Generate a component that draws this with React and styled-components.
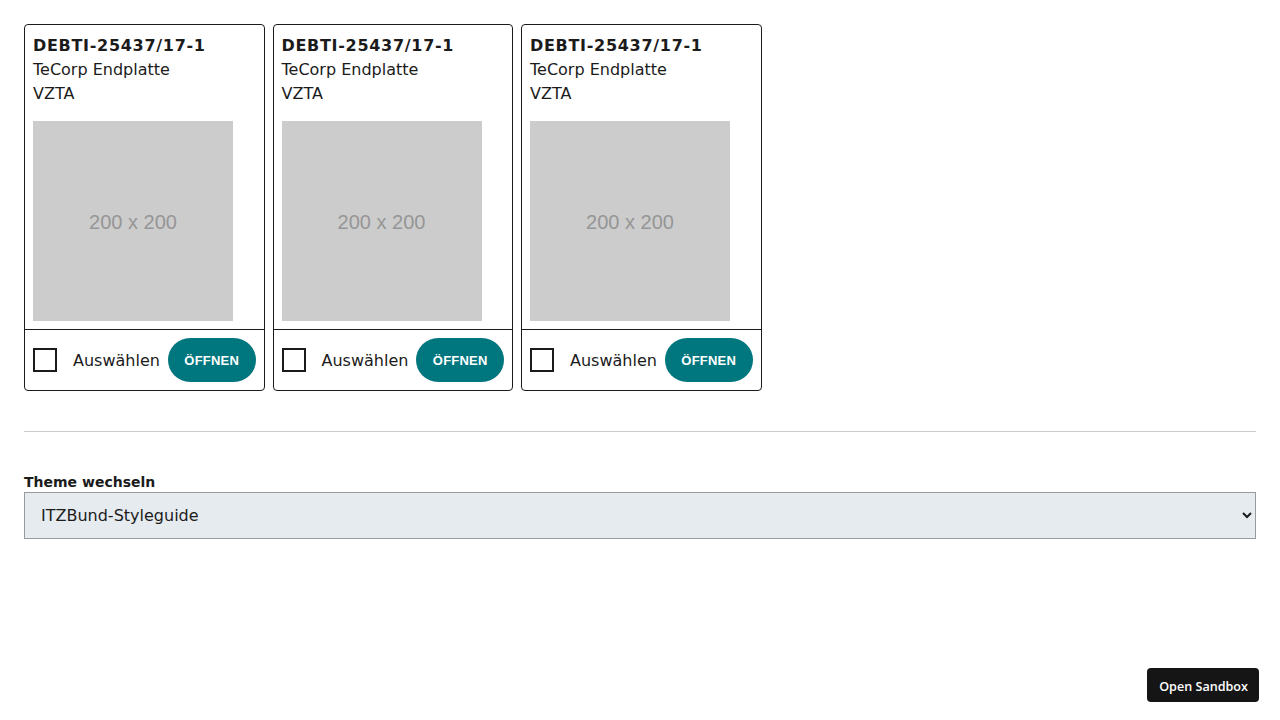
import React from "react";
import styled, { createGlobalStyle } from "styled-components";

const GlobalStyle = createGlobalStyle`
  body {
    margin: 0;
    font-family: "DejaVu Sans", Verdana, sans-serif;
    color: #1b1b1b;
    background: #fff;
  }
`;

const Page = styled.div`
  padding: 24px;
`;

const CardRow = styled.div`
  display: flex;
  gap: 8px;
`;

const Card = styled.div`
  width: 240.5px;
  box-sizing: border-box;
  border: 1px solid #1b1b1b;
  border-radius: 4px;
  display: flex;
  flex-direction: column;
`;

const CardBody = styled.div`
  padding: 9px 8px 8px;
  border-bottom: 1px solid #1b1b1b;
`;

const Title = styled.div`
  font-weight: bold;
  font-size: 16px;
  line-height: 24px;
  letter-spacing: 0.7px;
`;

const Line = styled.div`
  font-size: 16px;
  line-height: 24px;
`;

const Placeholder = styled.div`
  width: 200px;
  height: 200px;
  margin-top: 15px;
  background: #cccccc;
  color: #969696;
  font-family: "Liberation Sans", Arial, sans-serif;
  font-size: 20px;
  display: flex;
  align-items: center;
  justify-content: center;
  padding-top: 2px;
  box-sizing: border-box;
`;

const CardFooter = styled.div`
  display: flex;
  align-items: center;
  padding: 8px;
  gap: 8px;
`;

const CheckLabel = styled.label`
  display: flex;
  align-items: center;
  gap: 16px;
  font-size: 16px;
  cursor: pointer;
`;

const Box = styled.span`
  width: 24px;
  height: 24px;
  box-sizing: border-box;
  border: 2px solid #1b1b1b;
  background: #fff;
`;

const OpenButton = styled.button`
  margin-left: auto;
  width: 88px;
  height: 44px;
  border: none;
  border-radius: 22px;
  background: #00767e;
  color: #fff;
  font-family: "Liberation Sans", Arial, sans-serif;
  font-weight: bold;
  font-size: 13px;
  letter-spacing: 0.2px;
  cursor: pointer;
`;

const Divider = styled.hr`
  margin: 40px 0 40px;
  border: none;
  border-top: 1px solid #cccccc;
`;

const Label = styled.label`
  display: block;
  font-weight: bold;
  font-size: 14px;
  line-height: 20px;
`;

const Select = styled.select`
  display: block;
  width: 100%;
  height: 47px;
  padding: 0 12px;
  border: 1px solid #9a9a9a;
  border-radius: 0;
  background: #e6ebf0;
  font-family: "DejaVu Sans", Verdana, sans-serif;
  font-size: 16px;
  color: #1b1b1b;
`;

const SandboxButton = styled.button`
  position: fixed;
  right: 21px;
  bottom: 18px;
  height: 34px;
  padding: 2px 11px 0 12px;
  border: none;
  border-radius: 4px;
  background: #151515;
  color: #fff;
  font-family: "Open Sans", sans-serif;
  font-weight: 600;
  font-size: 12.6px;
`;

function ProductCard() {
  return (
    <Card>
      <CardBody>
        <Title>DEBTI-25437/17-1</Title>
        <Line>TeCorp Endplatte</Line>
        <Line>VZTA</Line>
        <Placeholder>200 x 200</Placeholder>
      </CardBody>
      <CardFooter>
        <CheckLabel>
          <Box />
          Auswählen
        </CheckLabel>
        <OpenButton>ÖFFNEN</OpenButton>
      </CardFooter>
    </Card>
  );
}

export default function App() {
  return (
    <Page>
      <GlobalStyle />
      <CardRow>
        <ProductCard />
        <ProductCard />
        <ProductCard />
      </CardRow>
      <Divider />
      <Label>Theme wechseln</Label>
      <Select defaultValue="itz">
        <option value="itz">ITZBund-Styleguide</option>
      </Select>
      <SandboxButton>Open Sandbox</SandboxButton>
    </Page>
  );
}
